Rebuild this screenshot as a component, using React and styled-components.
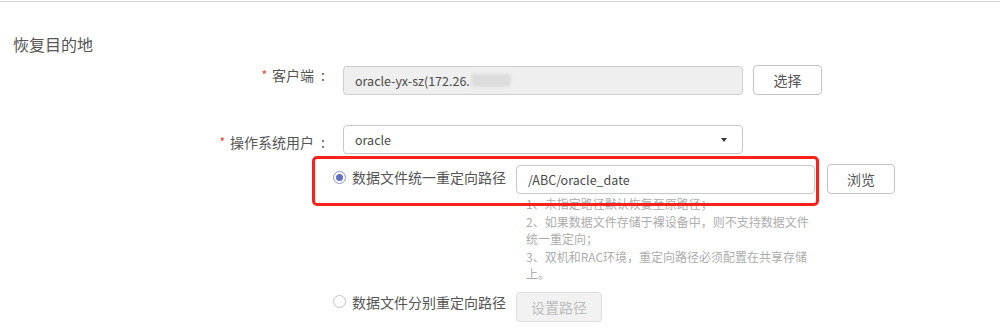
import React from "react";
import styled, { createGlobalStyle } from "styled-components";

const GlobalStyle = createGlobalStyle`
  html, body {
    margin: 0;
    padding: 0;
    background: #ffffff;
  }
  body {
    font-family: "Noto Sans CJK SC", "Noto Sans", sans-serif;
    color: #555555;
  }
  * { box-sizing: border-box; }
`;

const Page = styled.div`
  width: 1000px;
  height: 331px;
  padding-top: 1px;
  overflow: hidden;
`;

const Rule = styled.div`
  height: 1px;
  background: #d4d4d4;
`;

const Title = styled.h2`
  margin: 30px 0 0 0;
  padding-left: 13px;
  font-size: 16px;
  line-height: 24px;
  font-weight: 400;
  color: #555555;
`;

const FieldRow = styled.div`
  display: flex;
  align-items: flex-start;
  margin-top: ${(p) => p.$gap}px;
`;

const Label = styled.div`
  width: 328px;
  flex: none;
  text-align: right;
  font-size: 14px;
  line-height: 20px;
  padding-top: ${(p) => p.$offset}px;
  color: #555555;
  margin-right: 15px;
`;

const Req = styled.span`
  color: #ee3b2f;
  font-size: 12px;
  margin-right: 5px;
  vertical-align: 1px;
`;

const Colon = styled.span`
  display: inline-block;
  width: 14px;
  text-align: center;
  padding-left: 4px;
`;

const Controls = styled.div`
  display: flex;
  align-items: center;
  gap: ${(p) => p.$gap || 10}px;
`;

const TextBox = styled.div`
  width: ${(p) => p.$width}px;
  height: 29px;
  border: 1px solid ${(p) => (p.$readOnly ? "#cfcfcf" : "#c8c8c8")};
  border-radius: 4px;
  background: ${(p) => (p.$readOnly ? "#efefef" : "#ffffff")};
  padding: 0 10px 0 11px;
  display: flex;
  align-items: center;
  font-size: 12.5px;
  color: #4a4a4a;
  white-space: nowrap;
`;

const Blurred = styled.span`
  display: inline-block;
  width: 40px;
  height: 13px;
  margin-left: 1px;
  border-radius: 3px;
  background: #dcdcdc;
  filter: blur(1.5px);
`;

const SelectBox = styled(TextBox)`
  justify-content: space-between;
  padding-right: 15px;
`;

const Caret = styled.span`
  width: 0;
  height: 0;
  border-left: 3.5px solid transparent;
  border-right: 3.5px solid transparent;
  border-top: 4px solid #333333;
`;

const Button = styled.button`
  height: 30px;
  width: ${(p) => p.$width}px;
  border: 1px solid ${(p) => (p.disabled ? "#dddddd" : "#c4c4c4")};
  border-radius: 4px;
  background: ${(p) => (p.disabled ? "#f2f2f2" : "#ffffff")};
  color: ${(p) => (p.disabled ? "#bdbdbd" : "#555555")};
  font-family: "Noto Sans CJK SC", "Noto Sans", sans-serif;
  font-size: 14px;
  padding: 0;
  cursor: ${(p) => (p.disabled ? "default" : "pointer")};
`;

const RadioBlock = styled.div`
  margin-top: ${(p) => p.$gap}px;
  padding-left: 333px;
`;

const RadioLine = styled.div`
  position: relative;
  display: flex;
  align-items: flex-start;
`;

const RadioOption = styled.label`
  display: flex;
  align-items: center;
  gap: 6px;
  padding-top: ${(p) => p.$offset}px;
  margin-right: 10px;
  font-size: 14px;
  line-height: 20px;
  color: #555555;
  white-space: nowrap;
`;

const RadioDot = styled.span`
  width: 13px;
  height: 13px;
  border-radius: 50%;
  border: 1px solid ${(p) => (p.$checked ? "#8a97c4" : "#c4c4c4")};
  background: #ffffff;
  display: flex;
  align-items: center;
  justify-content: center;
  flex: none;
  &::after {
    content: "";
    width: 7px;
    height: 7px;
    border-radius: 50%;
    background: ${(p) => (p.$checked ? "#5e72bf" : "transparent")};
  }
`;

const InputGroup = styled.div`
  display: flex;
  flex-direction: column;
`;

const Hint = styled.div`
  width: 299px;
  margin-top: 1px;
  padding-left: 10px;
  font-size: 12px;
  line-height: 17.5px;
  color: #adadad;
`;

const Highlight = styled.div`
  position: absolute;
  left: -21px;
  top: -8px;
  width: 507px;
  height: 50px;
  border: 3px solid #f9221b;
  border-radius: 5px;
  pointer-events: none;
`;

export default function App() {
  return (
    <Page>
      <GlobalStyle />
      <Rule />
      <Title>恢复目的地</Title>

      <FieldRow $gap={9}>
        <Label $offset={0}>
          <Req>*</Req>客户端<Colon>:</Colon>
        </Label>
        <Controls>
          <TextBox $readOnly $width={400}>
            oracle-yx-sz(172.26.
            <Blurred />
          </TextBox>
          <Button $width={69}>选择</Button>
        </Controls>
      </FieldRow>

      <FieldRow $gap={30}>
        <Label $offset={7}>
          <Req>*</Req>操作系统用户<Colon>:</Colon>
        </Label>
        <SelectBox $width={400}>
          oracle
          <Caret />
        </SelectBox>
      </FieldRow>

      <RadioBlock $gap={10}>
        <RadioLine>
          <RadioOption $offset={3}>
            <RadioDot $checked />
            数据文件统一重定向路径
          </RadioOption>
          <InputGroup>
            <Controls $gap={12}>
              <TextBox $width={299}>/ABC/oracle_date</TextBox>
              <Button $width={68}>浏览</Button>
            </Controls>
            <Hint>
              1、未指定路径默认恢复至原路径；
              <br />
              2、如果数据文件存储于裸设备中，则不支持数据文件统一重定向；
              <br />
              3、双机和RAC环境，重定向路径必须配置在共享存储上。
            </Hint>
          </InputGroup>
          <Highlight />
        </RadioLine>
      </RadioBlock>

      <RadioBlock $gap={9}>
        <RadioLine>
          <RadioOption $offset={0}>
            <RadioDot />
            数据文件分别重定向路径
          </RadioOption>
          <Button $width={86} disabled>
            设置路径
          </Button>
        </RadioLine>
      </RadioBlock>
    </Page>
  );
}
